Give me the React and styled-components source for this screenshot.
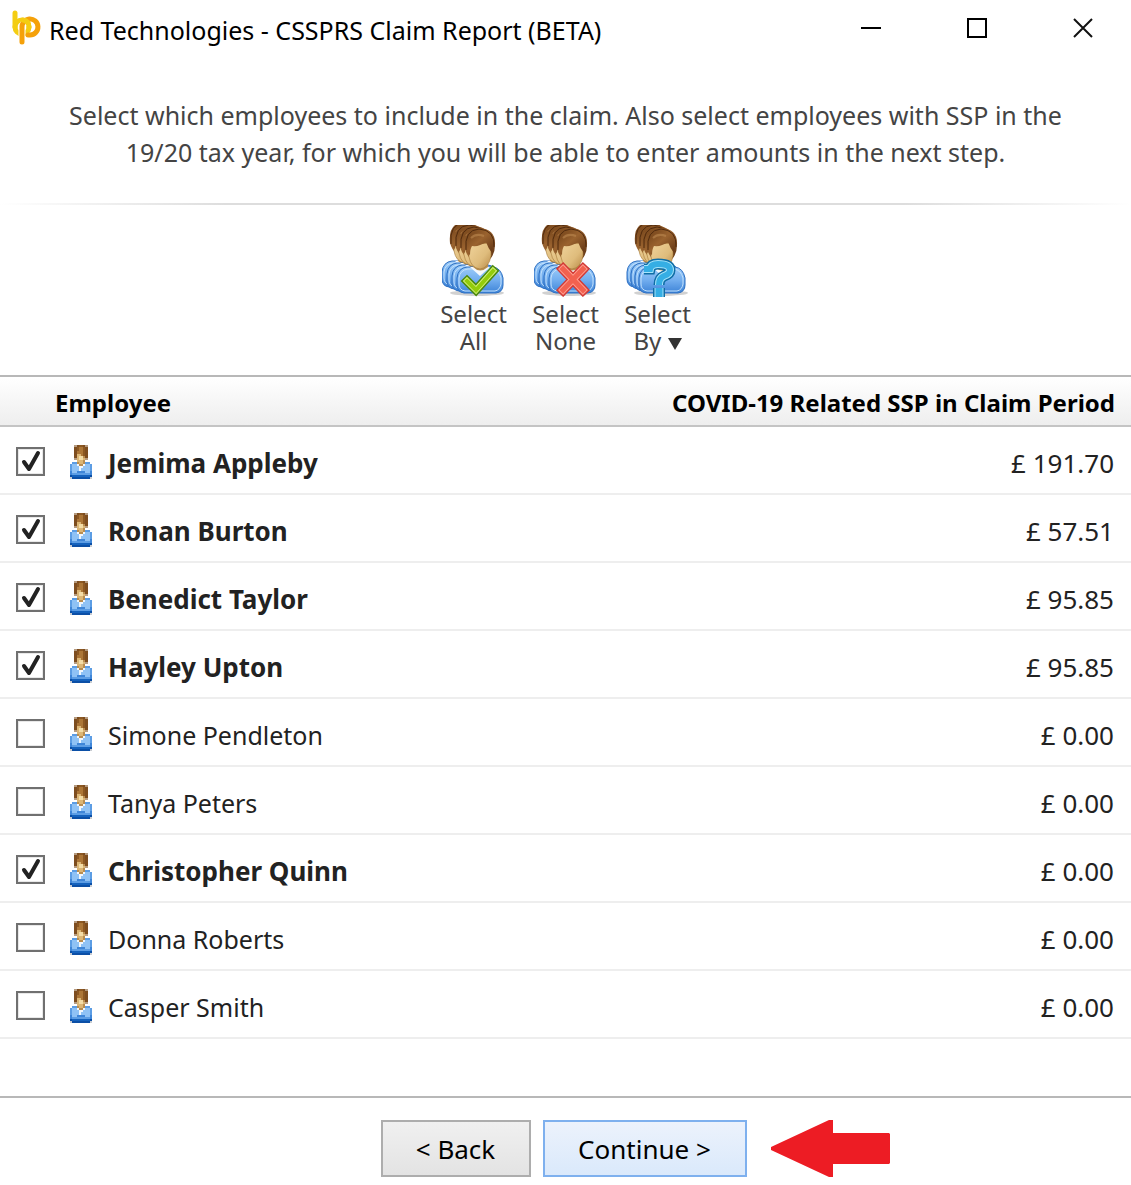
import React, { useState } from 'react'
import styled, { createGlobalStyle } from 'styled-components';

const EMPLOYEES = [
    { name: 'Jemima Appleby', amount: '191.70', included: true },
    { name: 'Ronan Burton', amount: '57.51', included: true },
    { name: 'Benedict Taylor', amount: '95.85', included: true },
    { name: 'Hayley Upton', amount: '95.85', included: true },
    { name: 'Simone Pendleton', amount: '0.00', included: false },
    { name: 'Tanya Peters', amount: '0.00', included: false },
    { name: 'Christopher Quinn', amount: '0.00', included: true },
    { name: 'Donna Roberts', amount: '0.00', included: false },
    { name: 'Casper Smith', amount: '0.00', included: false },
]

// one letter per pixel of the small avatar
const PIXELS = [
    '..dabbad..',
    '..abccba..',
    '..abccba..',
    '..acccba..',
    '..aeecba..',
    '..aeffga..',
    '..deffed..',
    '...eeeg...',
    '.hhgeeghh.',
    'hiiwggwiih',
    'hiiiwwiiih',
    'hiiiwiiiih',
    'jiijjjjiij',
    'jhhhhhhhhj',
    'kllllllllk',
    'mkkkkkkkkm',
]

const PALETTE = {
    a: '#7d4d1f', b: '#8c5822', c: '#ac7637', d: '#b59b80', e: '#dcb675', f: '#f3dca6',
    g: '#b98d50', h: '#5c9de4', i: '#8fc2f5', j: '#3f86d8', k: '#0b4fa6', l: '#1462bd',
    m: '#c8ccd2', w: '#f1f7fd',
}

const SmallPerson = () => (
    <Avatar viewBox="0 0 10 16" preserveAspectRatio="none" shapeRendering="crispEdges" aria-hidden="true">
        {PIXELS.map((line, y) => line.split('').map((p, x) => (
            p === '.' ? null : <rect key={`${x}-${y}`} x={x} y={y} width="1" height="1" fill={PALETTE[p]} />
        )))}
    </Avatar>
)

const Person = ({ x, y }) => (
    <g transform={`translate(${x} ${y})`}>
        <path d="M15 60V53Q16 43 25 42H51Q59 43 61 53V60Q61 67 54 68H22Q15 67 15 60Z" fill="url(#shirt)" stroke="#2c6fc2" />
        <path d="M17 59V53Q18 45 26 44H50Q57 45 59 53V59Q58 65 53 66H23Q17 65 17 59Z" fill="none" stroke="#c3e1fc" />
        <path d="M28 42L38 51L48 42Z" fill="#f5f8fc" />
        <path d="M31 36H46V42Q38 49 31 42Z" fill="#b88f50" />
        <path d="M23 24Q21 4 37 3Q54 4 53 20Q53 29 48 34H29Q25 31 23 24Z" fill="url(#hair)" />
        <path d="M27 24Q29 17 34 17Q41 20 49 17V31Q47 43 38 44Q29 43 27 32Z" fill="url(#face)" stroke="#a57838" strokeWidth="0.6" />
        <path d="M24 23Q24 8 36 6Q50 6 51 20L50 28Q46 23 44 17Q37 22 30 21Q28 24 28 30Q24 28 24 23Z" fill="url(#hair)" />
        <path d="M24 25Q22 5 37 4Q53 5 52 22" fill="none" stroke="#512b0e" strokeWidth="1" />
        <path d="M29 13Q34 8 42 11" fill="none" stroke="#bd8850" strokeWidth="2" opacity="0.6" />
    </g>
)

const People = ({ front, spread, children }) => (
    <PeopleIcon viewBox="0 0 64 72" aria-hidden="true">
        <defs>
            <linearGradient id="shirt" x1="0" y1="0" x2="0" y2="1">
                <stop offset="0" stopColor="#9ccbf8" />
                <stop offset="0.5" stopColor="#72aeef" />
                <stop offset="1" stopColor="#3d83d7" />
            </linearGradient>
            <linearGradient id="hair" x1="0" y1="0" x2="1" y2="1">
                <stop offset="0" stopColor="#704017" />
                <stop offset="0.45" stopColor="#9a632f" />
                <stop offset="1" stopColor="#5d3112" />
            </linearGradient>
            <linearGradient id="face" x1="0" y1="0" x2="1" y2="1">
                <stop offset="0" stopColor="#f0d49c" />
                <stop offset="0.6" stopColor="#dfbc7c" />
                <stop offset="1" stopColor="#b88a47" />
            </linearGradient>
        </defs>
        <ellipse cx="35" cy="68" rx="27" ry="3" fill="#000" opacity="0.18" />
        {[3, 2, 1, 0].map((n) => (
            <Person key={n} x={front - n * spread} y={-n * 2} />
        ))}
        {children}
    </PeopleIcon>
)

const TICK = 'M25 56L34 65L51 46'
const CROSS = 'M29 44L49 65M49 44L29 65'
const QUESTION = 'M18 44H24Q25 39 32 39Q44 39 44 45Q44 49 38 51Q33 53 33 60'
const DOT = 'M33 63V72'

const Badge = ({ d, edge, fill, shine, cap, weight }) => (
    <g fill="none" strokeLinecap={cap}>
        <path d={d} stroke={edge} strokeWidth={weight} />
        <path d={d} stroke={shine} strokeWidth={weight - 3} />
        <path d={d} stroke={fill} strokeWidth={weight - 5} />
    </g>
)

const Logo = () => (
    <LogoSvg viewBox="0 0 30 36" aria-hidden="true">
        <g fill="none" strokeWidth="5" strokeLinecap="round">
            <circle cx="11" cy="17" r="7" stroke="#f4cd12" />
            <path d="M4 3V17" stroke="#f4cd12" />
            <path d="M11 27V18A7 7 0 0 1 15 12" stroke="#fff" strokeWidth="7" strokeLinecap="butt" />
            <path d="M11 32V18A8 8 0 1 1 19 25H17" stroke="#f5a10a" />
            <path d="M12 10Q18 11 18 17" stroke="#f4cd12" />
        </g>
    </LogoSvg>
)

const App = () => {
    const [rows, setRows] = useState(EMPLOYEES)

    const toggle = (index) => {
        setRows(rows.map((row, i) => (i === index ? { ...row, included: !row.included } : row)))
    }
    const setAll = (included) => setRows(rows.map((row) => ({ ...row, included })))

    return (
        <Window>
            <GlobalStyle />
            <TitleBar>
                <Logo />
                <Title>Red Technologies - CSSPRS Claim Report (BETA)</Title>
                <WindowButtons>
                    <WindowButton type="button" aria-label="Minimise">
                        <svg width="20" height="20"><path d="M0 10H20" stroke="#000" strokeWidth="2" /></svg>
                    </WindowButton>
                    <WindowButton type="button" aria-label="Maximise">
                        <svg width="20" height="20"><path d="M1 1H19V19H1Z" fill="none" stroke="#000" strokeWidth="2" /></svg>
                    </WindowButton>
                    <WindowButton type="button" aria-label="Close">
                        <svg width="20" height="20"><path d="M1 1L19 19M19 1L1 19" stroke="#111" strokeWidth="2" /></svg>
                    </WindowButton>
                </WindowButtons>
            </TitleBar>
            <Intro>
                Select which employees to include in the claim. Also select employees with SSP in the
                19/20 tax year, for which you will be able to enter amounts in the next step.
            </Intro>
            <Divider />
            <Toolbar>
                <ToolButton type="button" onClick={() => setAll(true)}>
                    <People front={0} spread={5}>
                        <Badge d={TICK} edge="#4d8a0c" shine="#d5f279" fill="#93cc0c" cap="square" weight={9} />
                    </People>
                    <ToolLabel>Select<br />All</ToolLabel>
                </ToolButton>
                <ToolButton type="button" onClick={() => setAll(false)}>
                    <People front={0} spread={5}>
                        <Badge d={CROSS} edge="#d33a35" shine="#ff9c8d" fill="#f2614f" cap="square" weight={10} />
                    </People>
                    <ToolLabel>Select<br />None</ToolLabel>
                </ToolButton>
                <ToolButton type="button">
                    <People front={-2} spread={4}>
                        <Badge d={QUESTION} edge="#0f6da5" shine="#a5e4fb" fill="#35aee4" cap="butt" weight={11} />
                        <Badge d={DOT} edge="#0f6da5" shine="#a5e4fb" fill="#35aee4" cap="butt" weight={12} />
                    </People>
                    <ToolLabel>Select<br />By <Caret viewBox="0 0 14 12" aria-hidden="true"><path d="M0 0H14L7 12Z" /></Caret></ToolLabel>
                </ToolButton>
            </Toolbar>
            <ListArea>
                <Table>
                    <thead>
                        <tr>
                            <CheckHead aria-label="Include" />
                            <HeadCell $textAlign="left">Employee</HeadCell>
                            <HeadCell $textAlign="right">COVID-19 Related SSP in Claim Period</HeadCell>
                        </tr>
                    </thead>
                    <tbody>
                        {rows.map((row, i) => (
                            <tr key={row.name}>
                                <CheckCell>
                                    <CheckBox>
                                        <CheckInput
                                            type="checkbox"
                                            id={`employee-${i}`}
                                            checked={row.included}
                                            onChange={() => toggle(i)}
                                        />
                                        {row.included && (
                                            <CheckMark viewBox="0 0 29 29" aria-hidden="true">
                                                <path d="M8 15L13 22L22 6" />
                                            </CheckMark>
                                        )}
                                    </CheckBox>
                                </CheckCell>
                                <NameCell>
                                    <NameLabel htmlFor={`employee-${i}`} $included={row.included}>
                                        <SmallPerson />
                                        {row.name}
                                    </NameLabel>
                                </NameCell>
                                <AmountCell>£ {row.amount}</AmountCell>
                            </tr>
                        ))}
                    </tbody>
                </Table>
            </ListArea>
            <Footer>
                <BackButton type="button">&lt; Back</BackButton>
                <ContinueButton type="button">Continue &gt;</ContinueButton>
                <Arrow viewBox="0 0 119 57" aria-hidden="true">
                    <path d="M0 27L58 0H62V13H118L119 14V43L118 44H62V57H58L0 30Z" fill="#ed1c24" />
                </Arrow>
            </Footer>
        </Window>
    )
}

const GlobalStyle = createGlobalStyle`
    * {
        box-sizing: border-box;
    }
    body {
        margin: 0;
        background-color: #ffffff;
        font-family: "Noto Sans", "Open Sans", sans-serif;
        font-size: 25px;
        color: #222222;
    }
    button {
        font: inherit;
        cursor: pointer;
    }
`
const Window = styled.main`
    min-height: 100vh;
    display: flex;
    flex-direction: column;
`
const TitleBar = styled.header`
    display: flex;
    align-items: center;
    height: 60px;
    padding-left: 11px;
`
const LogoSvg = styled.svg`
    width: 30px;
    height: 36px;
    margin-bottom: 4px;
    flex-shrink: 0;
`
const Title = styled.h1`
    flex: 1;
    margin: 0 0 0 8px;
    font-size: 25px;
    font-weight: normal;
    color: #000000;
`
const WindowButtons = styled.div`
    display: flex;
    gap: 10px;
`
const WindowButton = styled.button`
    display: flex;
    align-items: center;
    justify-content: center;
    width: 96px;
    height: 56px;
    margin-bottom: 4px;
    padding: 0;
    border: 0;
    background: none;
`
const Intro = styled.p`
    margin: 0;
    padding: 37px 56px 32px;
    line-height: 37px;
    text-align: center;
    color: #444444;
`
const Divider = styled.hr`
    width: 100%;
    height: 2px;
    margin: 0;
    border: 0;
    background: linear-gradient(to right, #ffffff, #dddddd 20%, #dddddd 80%, #ffffff);
`
const Toolbar = styled.div`
    display: flex;
    justify-content: center;
    gap: 12px;
    padding: 20px 0;
`
const ToolButton = styled.button`
    width: 80px;
    padding: 0;
    border: 0;
    background: none;
    color: #444444;
`
const PeopleIcon = styled.svg`
    display: block;
    width: 64px;
    height: 72px;
    margin: 0 auto 3px;
`
const ToolLabel = styled.span`
    display: block;
    padding-bottom: 1px;
    font-size: 24px;
    line-height: 27px;
`
const Caret = styled.svg`
    width: 14px;
    height: 12px;
    fill: #333333;
`
const ListArea = styled.section`
    flex: 1;
    border-top: 2px solid #b8b8b8;
    border-bottom: 2px solid #b8b8b8;
`
const Table = styled.table`
    width: 100%;
    border-collapse: separate;
    border-spacing: 0;
`
const HeadCell = styled.th`
    height: 50px;
    padding: 2px 16px 0 0;
    border-bottom: 2px solid #c4c4c4;
    background: linear-gradient(#ffffff, #eeeeee);
    font-size: 24px;
    text-align: ${props => props.$textAlign};
    color: #000000;
`
const CheckHead = styled(HeadCell)`
    width: 55px;
`
const Cell = styled.td`
    height: 68px;
    padding: 0;
    border-bottom: 2px solid #eeeeee;
`
const CheckCell = styled(Cell)`
    padding: 2px 0 0 16px;
`
const CheckBox = styled.span`
    display: grid;
    width: 29px;
    height: 29px;
`
const CheckInput = styled.input`
    grid-area: 1 / 1;
    appearance: none;
    width: 29px;
    height: 29px;
    margin: 0;
    border: 2px solid #707070;
    background-color: #ffffff;
    box-shadow: inset 0 0 0 1px #e8e8e8;
`
const CheckMark = styled.svg`
    grid-area: 1 / 1;
    fill: none;
    stroke: #222222;
    stroke-width: 4;
    stroke-linecap: round;
    stroke-linejoin: round;
    pointer-events: none;
`
const NameCell = styled(Cell)`
    padding: 6px 0 0 15px;
`
const NameLabel = styled.label`
    display: flex;
    align-items: center;
    gap: 16px;
    font-size: ${props => props.$included ? "26px" : "25px"};
    font-weight: ${props => props.$included ? "bold" : "normal"};
`
const Avatar = styled.svg`
    width: 22px;
    height: 34px;
    margin-bottom: 2px;
    flex-shrink: 0;
`
const AmountCell = styled(Cell)`
    padding: 6px 17px 0 0;
    font-size: 26px;
    text-align: right;
`
const Footer = styled.footer`
    display: grid;
    grid-template-columns: 1fr auto auto 1fr;
    gap: 12px;
    padding: 22px 4px 8px 0;
`
const DialogButton = styled.button`
    height: 57px;
    padding: 0;
    font-size: 26px;
    color: #000000;
`
const BackButton = styled(DialogButton)`
    grid-column: 2;
    width: 150px;
    border: 2px solid #adadad;
    background: linear-gradient(#f0f0f0, #e3e3e3);
`
const ContinueButton = styled(DialogButton)`
    width: 204px;
    border: 2px solid #7eb0ee;
    background: linear-gradient(#ecf2fc, #dae9fb);
`
const Arrow = styled.svg`
    width: 119px;
    height: 57px;
    margin-left: 12px;
`
export default App
